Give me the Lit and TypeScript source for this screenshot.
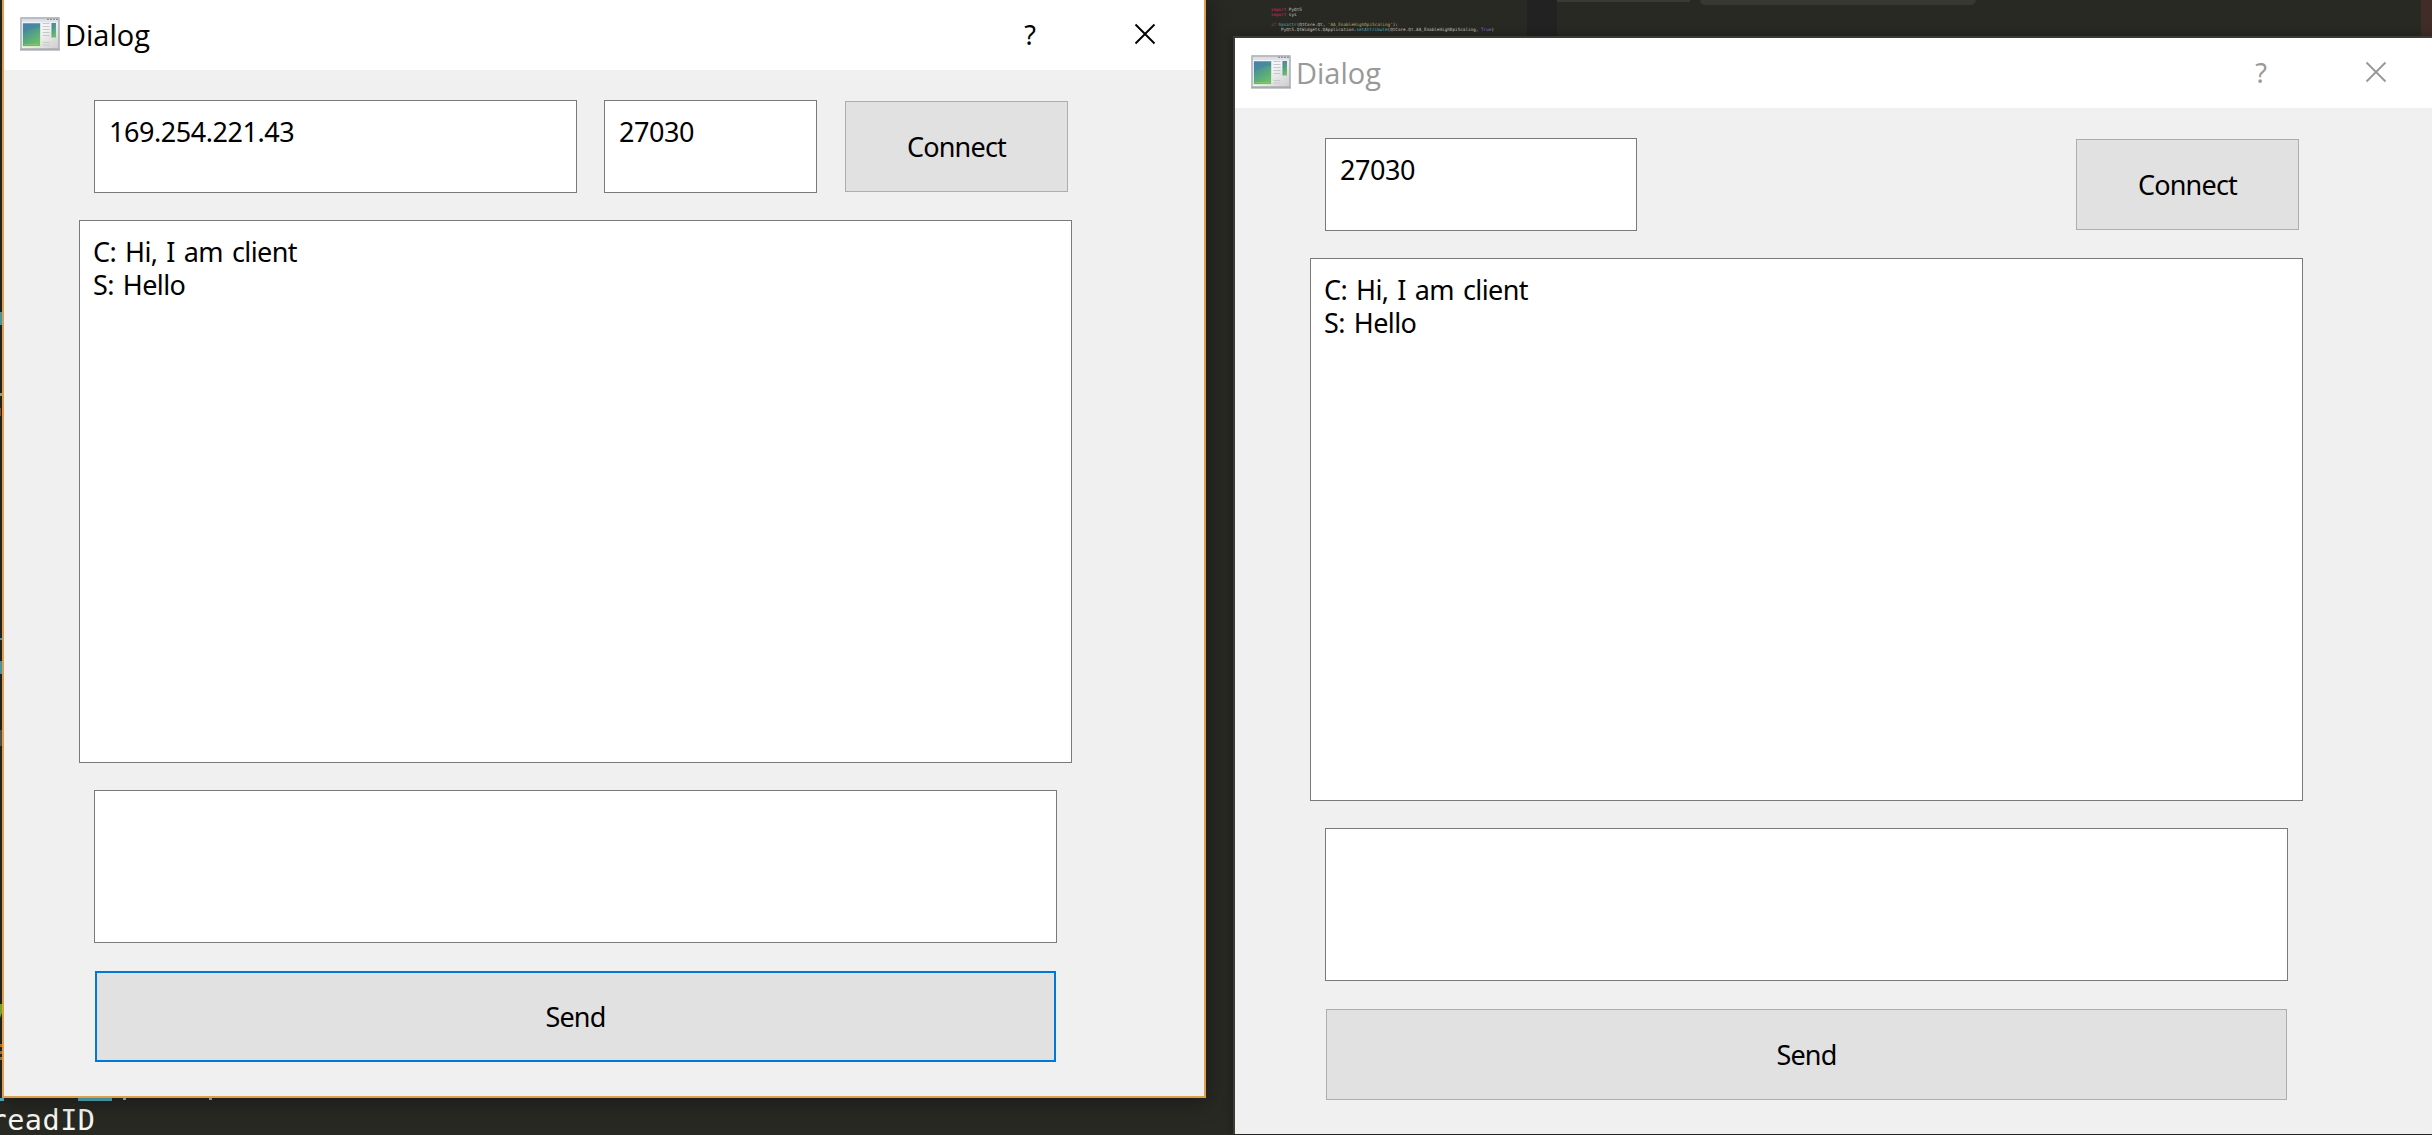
import { LitElement, html, svg, css } from "lit";
import { customElement, property } from "lit/decorators.js";
import { classMap } from "lit/directives/class-map.js";

@customElement("chat-dialog")
class ChatDialog extends LitElement {
  @property({ type: Boolean, reflect: true }) active = false;
  @property() address = "";
  @property() port = "";
  @property({ attribute: false }) log: string[] = [];

  static styles = css`
    :host {
      display: flex;
      flex-direction: column;
      box-sizing: border-box;
      background: #f0f0f0;
      font-family: "Noto Sans", "Open Sans", sans-serif;
      font-size: 27px;
      line-height: 33px;
      color: #000;
    }
    .title {
      display: flex;
      align-items: center;
      height: 70px;
      flex: none;
      box-sizing: border-box;
      background: #fff;
      padding: 0 1.5px 2px 16px;
      color: #999;
    }
    :host([active]) .title { color: #000; }
    .icon { width: 40px; height: 34px; flex: none; margin-top: -1px; }
    .name {
      flex: 1;
      margin-left: 5px;
      font-size: 29px;
      line-height: 35px;
      font-family: "Open Sans", sans-serif;
      letter-spacing: 0;
    }
    .control {
      display: flex;
      align-items: center;
      justify-content: center;
      width: 115px;
      height: 68px;
    }
    .control svg { width: 22px; height: 22px; }
    .body {
      display: flex;
      flex-direction: column;
      width: 993px;
      padding: 30px 0 0 75px;
    }
    .row {
      display: flex;
      align-items: center;
      height: 93px;
      margin: 0 4px 27px 15px;
    }
    .field {
      box-sizing: border-box;
      border: 1px solid #7a7a7a;
      background: #fff;
      height: 93px;
      padding: 14px 0 0 14px;
      letter-spacing: -0.45px;
    }
    .address { width: 483px; margin-right: 27px; }
    .port { width: 213px; }
    .port.wide { width: 312px; }
    .button {
      box-sizing: border-box;
      display: flex;
      align-items: center;
      justify-content: center;
      height: 91px;
      border: 1px solid #adadad;
      background: #e1e1e1;
      letter-spacing: -0.8px;
    }
    .connect { width: 223px; margin-left: auto; }
    .log {
      box-sizing: border-box;
      height: 543px;
      border: 1px solid #7a7a7a;
      background: #fff;
      padding: 14px 0 0 13px;
      letter-spacing: -0.6px;
      word-spacing: 2.5px;
    }
    .message { height: 153px; margin: 27px 15px 28px; }
    .send { margin: 0 16px; }
    .send.focused { border: 2px solid #0078d7; }
  `;

  render() {
    return html`
      <div class="title">
        ${svg`<svg class="icon" viewBox="0 0 40 34">
          <defs>
            <linearGradient id="pane" x1="0" y1="0" x2=".5" y2="1">
              <stop offset="0" stop-color="#4a80ac" /><stop offset=".4" stop-color="#4a9690" />
              <stop offset="1" stop-color="#6cbc6c" />
            </linearGradient>
            <linearGradient id="frame" x1="0" y1="0" x2="1" y2="1">
              <stop offset="0" stop-color="#f8f8f8" /><stop offset=".5" stop-color="#f3f3f3" /><stop offset="1" stop-color="#ccc" />
            </linearGradient>
          </defs>
          <rect x="1" y="1" width="38" height="31" fill="url(#frame)" stroke="#a9adb2" stroke-width="1.5" />
          <path d="M0 33H40" stroke="#8f9398" stroke-width="1.2" />
          <path d="M1.5 1.5H38.5" stroke="#b9bcc0" stroke-width="2" />
          <path d="M2 4H38" stroke="#dde3ee" stroke-width="2.4" />
          <path d="M27 2.4H38" stroke="#8d9094" stroke-width="1.2" stroke-dasharray="2 1" />
          <rect x="2.6" y="6" width="18" height="23.5" fill="url(#pane)" stroke="#f9fbfb" stroke-width=".6" />
          <path d="M3 17Q8 11 20 11V6.4H3Z" fill="#477fac" opacity=".45" />
          <path d="M4 27.6H19" stroke="#8fd05f" stroke-width="1" opacity=".7" />
          <path d="M22.5 6.5h7M22.5 9.5h7M22.5 12.5h7M22.5 15.5h7M22.5 18.5h7M22.5 25.5h7M22.5 28h7" stroke="#c6c8ca" stroke-width="1" />
          <rect x="31.5" y="6" width="4.5" height="14.5" fill="url(#pane)" />
        </svg>`}
        <span class="name">Dialog</span>
        <span class="control">?</span>
        <span class="control">
          ${svg`<svg viewBox="0 0 22 22"><path d="M1.5 1.5L20.5 20.5M20.5 1.5L1.5 20.5" fill="none" stroke="currentColor" stroke-width="1.9" /></svg>`}
        </span>
      </div>
      <div class="body">
        <div class="row">
          ${this.address ? html`<div class="field address">${this.address}</div>` : null}
          <div class=${classMap({ field: true, port: true, wide: !this.address })}>${this.port}</div>
          <div class="button connect">Connect</div>
        </div>
        <div class="log">${this.log.map((line) => html`<div>${line}</div>`)}</div>
        <div class="field message"></div>
        <div class=${classMap({ button: true, send: true, focused: this.active })}>Send</div>
      </div>
    `;
  }
}

@customElement("app-root")
class AppRoot extends LitElement {
  static styles = css`
    :host {
      display: block;
      position: relative;
      width: 2432px;
      height: 1135px;
      overflow: hidden;
      background: #282923;
    }
    .minimap {
      position: absolute;
      left: 1206px;
      top: 0;
      width: 321px;
      height: 38px;
      box-sizing: border-box;
      padding: 6.5px 0 0 64.7px;
      overflow: hidden;
      font: 4.32px/5px "DejaVu Sans Mono", monospace;
      white-space: pre;
      color: #c8c8c0;
    }
    .k { color: #d82668; }
    .f { color: #4fb0c2; }
    .s { color: #b5ad60; }
    .c { color: #8f6ad0; }
    .divider { position: absolute; left: 1527px; top: 0; width: 30px; height: 38px; background: #222; }
    .tab { position: absolute; left: 1557px; top: 0; width: 133px; height: 2px; background: #3a3a31; }
    .thumb { position: absolute; left: 1700px; top: 0; width: 276px; height: 5px; border-radius: 0 0 8px 8px; background: #383831; }
    .edge { position: absolute; left: 2421px; top: 0; width: 11px; height: 38px; background: #412c28; }
    .code {
      position: absolute;
      left: -10.5px;
      top: 1104px;
      font: 28.5px/34px "DejaVu Sans Mono", monospace;
      letter-spacing: 0.5px;
      white-space: pre;
      color: #f8f8f2;
    }
    .scraps { position: absolute; left: 0; top: 0; width: 240px; height: 1135px; }
    .client, .server { position: absolute; }
    .client {
      left: 2px;
      top: 0;
      width: 1204px;
      height: 1098px;
      border: solid #dd9f4b;
      border-width: 0 2px 2px;
      box-shadow: 0 3px 22px rgba(0, 0, 0, 0.4);
    }
    .server {
      left: 1233px;
      top: 36px;
      width: 1202px;
      height: 1098px;
      border: solid #3b3b38;
      border-width: 2px 0 0 2px;
      box-shadow: 0 0 10px rgba(0, 0, 0, 0.3);
    }
  `;

  private log = ["C: Hi, I am client", "S: Hello"];

  render() {
    return html`
      <div class="minimap"><div><span class="k">import</span> PyQt5</div><div><span class="k">import</span> sys</div><div> </div><div><span class="k">if</span> <span class="f">hasattr</span>(QtCore.Qt, <span class="s">'AA_EnableHighDpiScaling'</span>):</div><div>    PyQt5.QtWidgets.QApplication.<span class="f">setAttribute</span>(QtCore.Qt.AA_EnableHighDpiScaling, <span class="c">True</span>)</div></div>
      <div class="divider"></div>
      <div class="tab"></div>
      <div class="thumb"></div>
      <div class="edge"></div>
      ${svg`<svg class="scraps" viewBox="0 0 240 1135">
        <path d="M0 312H2V325H0ZM0 638H2V640H0ZM0 661H2V674H0ZM0 1098H4V1101H0ZM78 1098H112V1101H78Z" fill="#56b6c8" />
        <path d="M0 393H2V396H0Z" fill="#c9bd68" />
        <path d="M0 408H1V416H0Z" fill="#b5561c" />
        <path d="M0 730H2V746H0Z" fill="#626057" />
        <path d="M0 1004H2V1013L0 1018Z" fill="#8fca2a" />
        <path d="M0 1044H2V1047H0ZM0 1051H2V1054H0ZM0 1057H2V1060H0Z" fill="#d9801f" />
        <path d="M123 1098H126V1100H123ZM209 1098H212V1100H209Z" fill="#b8b8b2" />
      </svg>`}
      <div class="code">readID</div>
      <chat-dialog class="server" port="27030" .log=${this.log}></chat-dialog>
      <chat-dialog class="client" active address="169.254.221.43" port="27030" .log=${this.log}></chat-dialog>
    `;
  }
}
